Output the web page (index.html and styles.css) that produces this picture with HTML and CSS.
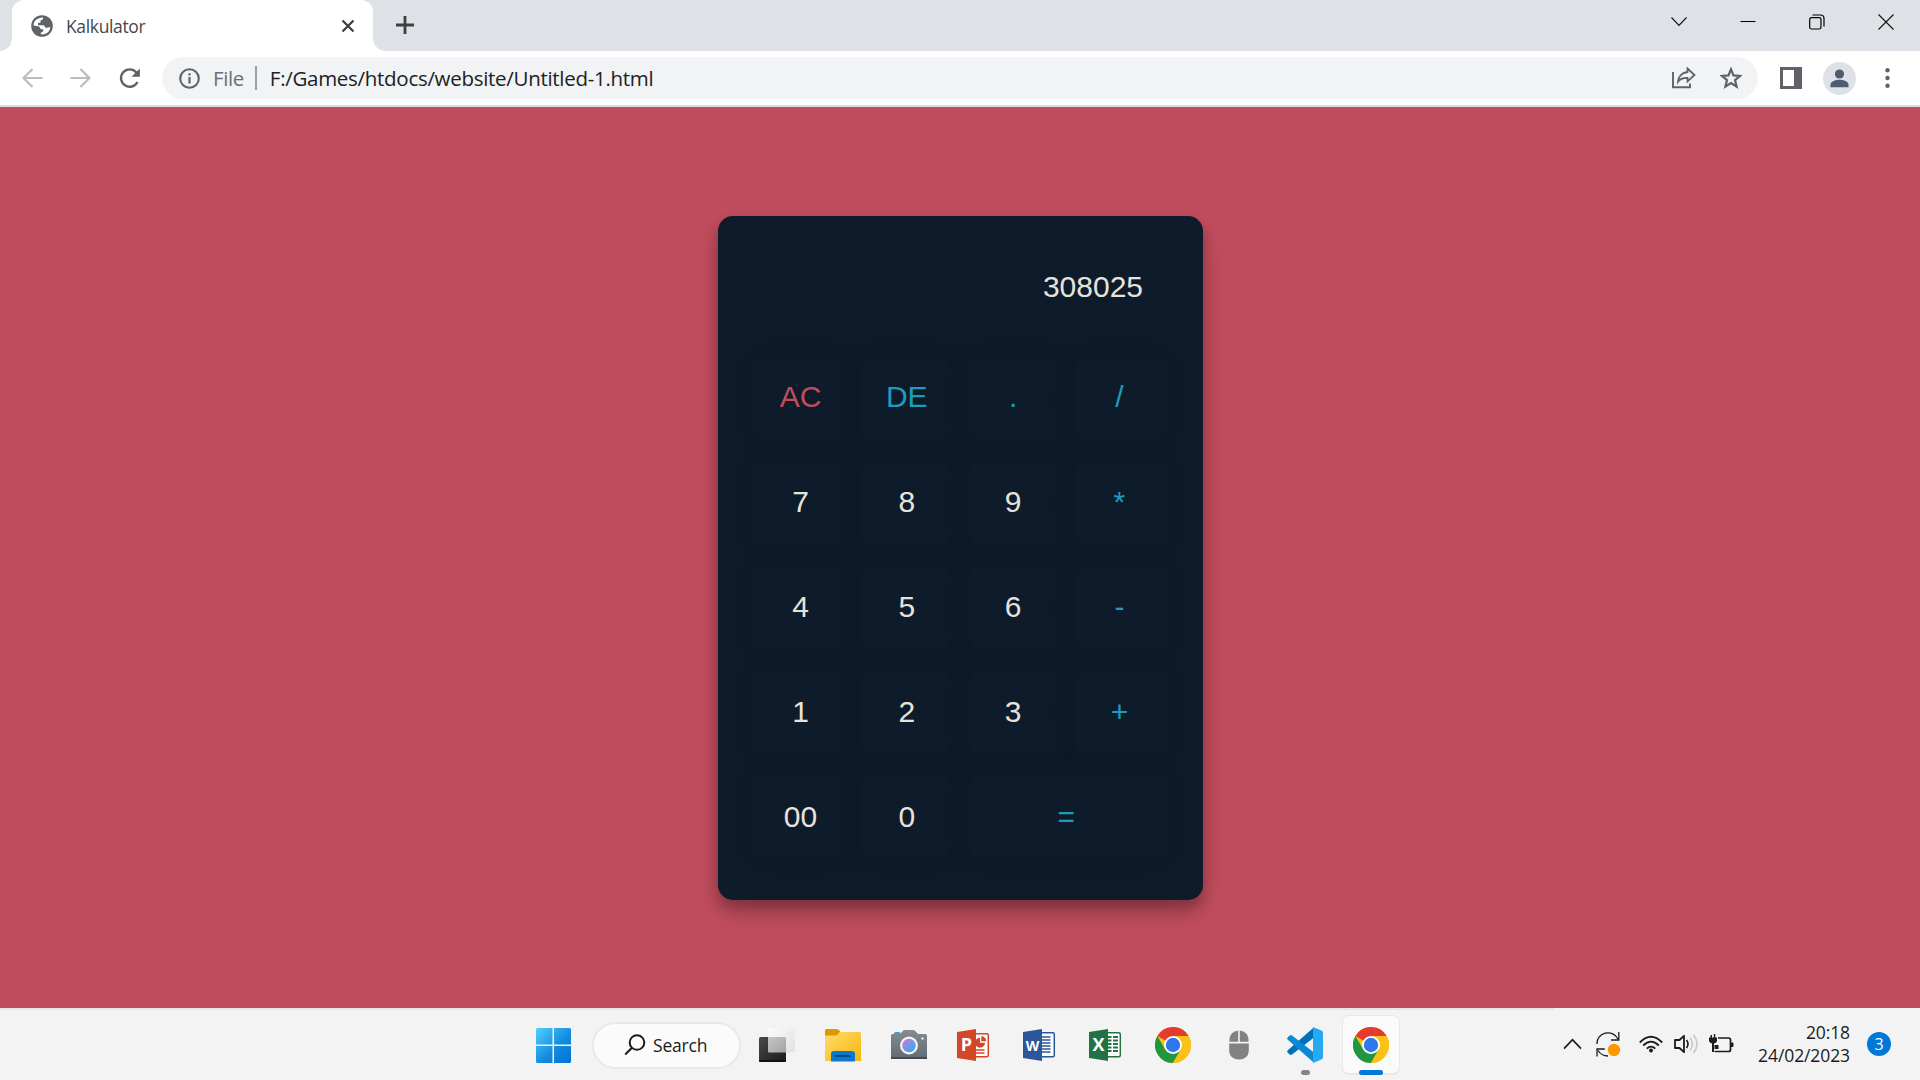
FILE: index.html
```html
<!DOCTYPE html>
<html lang="en">
<head>
<meta charset="utf-8">
<title>Kalkulator</title>
<link rel="stylesheet" href="styles.css">
</head>
<body>
<div class="screen">
  <header class="tabstrip">
    <div class="tab">
      <svg class="globe" width="22" height="22" viewBox="0 0 22 22"><circle cx="11" cy="11" r="10.800" fill="#5f6368"/><path d="M2.500 10.500C2.700 6 6.200 2.600 12 2.500c.3 1.600-.4 2.600-2.300 2.800L9.500 7.600 7 8v2.300h5.200c1.300 0 1.500 1 1.800 2 1.400.9 3.300.6 5.200-.5.200 4.800-4.300 8.500-9.400 7.500v-1.800c2.300-.2 2.700-1.300 2.500-3-2.500-.2-3.600-.9-3.900-3z" fill="#fff"/></svg>
      <span class="tab-title">Kalkulator</span>
      <svg class="tab-close" width="14" height="14" viewBox="0 0 14 14"><path d="M1.500 1.500l11 11m0-11l-11 11" stroke="#3c4043" stroke-width="2.300"/></svg>
    </div>
    <svg class="new-tab" width="18" height="18" viewBox="0 0 18 18"><path d="M9 0v18M0 9h18" stroke="#3c4043" stroke-width="2.800"/></svg>
    <div class="window-controls">
      <svg width="16" height="10" viewBox="0 0 16 10"><path d="M.5.5L8 8.500l7.500-8" fill="none" stroke="#111" stroke-width="1.100"/></svg>
      <svg width="16" height="16" viewBox="0 0 16 16"><path d="M.5 7.500h15" stroke="#000"/></svg>
      <svg width="16" height="16" viewBox="0 0 16 16"><rect x=".7" y="3.700" width="11.300" height="11.300" rx="1.800" fill="none" stroke="#000" stroke-width="1.200"/><path d="M3.500 1h8c2.200 0 3.500 1.500 3.500 3.500v8" fill="none" stroke="#000" stroke-width="1.200"/></svg>
      <svg width="16" height="16" viewBox="0 0 16 16"><path d="M.5.5l15 15m0-15l-15 15" stroke="#111" stroke-width="1.100"/></svg>
    </div>
  </header>

  <nav class="toolbar">
    <svg class="back" width="21" height="20" viewBox="0 0 21 20"><path d="M20.500 10H2M10.500 1L1.500 10l9 9" fill="none" stroke="#babcbe" stroke-width="2.200"/></svg>
    <svg class="forward" width="21" height="20" viewBox="0 0 21 20"><path d="M.5 10H19M10.500 1l9 9-9 9" fill="none" stroke="#babcbe" stroke-width="2.200"/></svg>
    <svg class="reload" width="22" height="21" viewBox="0 0 22 21"><path d="M17.300 4.400A8.700 8.700 0 1 0 18.500 14" fill="none" stroke="#5f6368" stroke-width="2.400"/><path d="M20.800.5v8.200h-8.200z" fill="#5f6368"/></svg>
    <div class="omnibox">
      <svg class="info" width="21" height="21" viewBox="0 0 21 21"><circle cx="10.500" cy="10.500" r="9.300" fill="none" stroke="#5f6368" stroke-width="2.100"/><path d="M10.500 9v6.500M10.500 5.200v2.300" stroke="#5f6368" stroke-width="2.200"/></svg>
      <span class="scheme">File</span>
      <span class="divider"></span>
      <span class="url">F:/Games/htdocs/website/Untitled-1.html</span>
      <svg class="share" width="24" height="22" viewBox="0 0 24 22"><path d="M1 5v15.300h17v-3.800" fill="none" stroke="#5f6368" stroke-width="1.900"/><path d="M15.500 1.500L22.500 8l-7 6.500v-3.700c-4.500-.2-7.500 1-9.500 4 .3-5.500 4-9.200 9.500-9.800z" fill="none" stroke="#5f6368" stroke-width="1.800"/></svg>
      <svg class="star" width="22" height="22" viewBox="0 0 22 22"><path d="M11 2.300l2.500 6.100 6.500.5-5 4.200 1.600 6.400L11 16l-5.600 3.500L7 13.100 2 8.900l6.500-.5z" fill="none" stroke="#5f6368" stroke-width="2.200"/></svg>
    </div>
    <svg class="panel" width="22" height="22" viewBox="0 0 22 22"><path fill-rule="evenodd" d="M0 0h22v22H0zM3 3v16h11V3z" fill="#5f6368"/></svg>
    <svg class="avatar" width="33" height="33" viewBox="0 0 33 33"><circle cx="16.500" cy="16.500" r="16.500" fill="#dee1e6"/><circle cx="16.500" cy="12" r="4.600" fill="#4f5b70"/><path d="M7.500 25.300v-2.500c0-3.300 5-5 9-5s9 1.700 9 5v2.500z" fill="#4f5b70"/></svg>
    <svg class="menu" width="5" height="20" viewBox="0 0 5 20"><g fill="#5f6368"><circle cx="2.500" cy="2.300" r="2.200"/><circle cx="2.500" cy="10" r="2.200"/><circle cx="2.500" cy="17.700" r="2.200"/></g></svg>
  </nav>

  <main class="page">
    <section class="calculator">
      <div class="display">308025</div>
      <div class="keys">
        <button class="key clear">AC</button><button class="key op">DE</button><button class="key op">.</button><button class="key op">/</button>
        <button class="key">7</button><button class="key">8</button><button class="key">9</button><button class="key op">*</button>
        <button class="key">4</button><button class="key">5</button><button class="key">6</button><button class="key op">-</button>
        <button class="key">1</button><button class="key">2</button><button class="key">3</button><button class="key op">+</button>
        <button class="key">00</button><button class="key">0</button><button class="key op equals">=</button>
      </div>
    </section>
  </main>

  <footer class="taskbar">
    <svg width="0" height="0" class="defs"><defs>
      <linearGradient id="win" x1="0" y1="0" x2="1" y2="1"><stop offset="0" stop-color="#4fd3ff"/><stop offset=".55" stop-color="#168cdf"/><stop offset="1" stop-color="#0072d2"/></linearGradient>
      <linearGradient id="folder" x1="0" y1="0" x2="1" y2="1"><stop offset="0" stop-color="#ffdc70"/><stop offset="1" stop-color="#f7b508"/></linearGradient>
      <linearGradient id="lens" x1="0" y1="0" x2="1" y2="1"><stop offset=".15" stop-color="#b780df"/><stop offset=".9" stop-color="#35aaf0"/></linearGradient>
      <linearGradient id="dark" x1="0" y1="0" x2="1" y2="1"><stop offset="0" stop-color="#4a4947"/><stop offset="1" stop-color="#1c1c1b"/></linearGradient>
      <linearGradient id="glass" x1="0" y1="0" x2="1" y2="1"><stop offset="0" stop-color="#fff" stop-opacity=".95"/><stop offset="1" stop-color="#d8d8d8" stop-opacity=".85"/></linearGradient>
      <linearGradient id="body" x1="0" y1="0" x2="0" y2="1"><stop offset="0" stop-color="#858b92"/><stop offset="1" stop-color="#646a72"/></linearGradient>
      <symbol id="chrome" viewBox="0 0 36 36"><circle cx="18" cy="18" r="18" fill="#fbc116"/><path d="M18 18L2.400 9A18 18 0 0 1 33.600 9z" fill="#e33b2e"/><path d="M2.400 9A18 18 0 0 0 18 36l7.800-13.500L10.200 22.500z" fill="#22963f"/><path d="M18 9h15.600a18 18 0 0 1-15.600 27l7.800-13.500z" fill="#fbc116"/><circle cx="18" cy="18" r="9" fill="#fff"/><circle cx="18" cy="18" r="7.200" fill="#2f78ec"/></symbol>
    </defs></svg>
    <div class="apps">
      <span class="app"><svg width="35" height="35" viewBox="0 0 35 35"><path fill="url(#win)" d="M1.500 0H16.500V16.500H0V1.500Q0 0 1.500 0zM18 0h15.500Q35 0 35 1.500v15H18zM0 18h16.500v17h-15Q0 35 0 33.500zM18 18h17v15.500q0 1.500-1.500 1.500H18z"/></svg></span>
      <div class="search"><svg width="22" height="22" viewBox="0 0 22 22"><circle cx="13" cy="8.500" r="7.300" fill="none" stroke="#1c1c1c" stroke-width="2"/><path d="M8 13.700L1.200 20.500" stroke="#1c1c1c" stroke-width="2"/></svg><span>Search</span></div>
      <span class="app"><svg width="36" height="36" viewBox="0 0 36 36"><rect x="0" y="10" width="27" height="25" rx="1.500" fill="url(#dark)"/><path d="M0 33h27v.5q0 1.500-1.500 1.500h-24Q0 35 0 33.500z" fill="#111"/><rect x="9" y="1" width="27" height="24.500" rx="1" fill="url(#glass)" opacity=".78"/></svg></span>
      <span class="app"><svg width="36" height="36" viewBox="0 0 36 36"><path d="M0 3.500Q0 2 1.500 2H11q2 0 3.500 1.500L16 6v5H0z" fill="#d99a06"/><path d="M0 8.500h10q2.500 0 4.500-3.500H34.500Q36 5 36 6.500V34H0z" fill="url(#folder)"/><path d="M6 34.500V27q0-3 3-3h18q3 0 3 3v7.500z" fill="#0b78cc"/><path d="M11 29h14" stroke="#06498f" stroke-width="2" stroke-linecap="round"/></svg></span>
      <span class="app"><svg width="36" height="36" viewBox="0 0 36 36"><path d="M3 8V6.500Q3 5 4.500 5H8q1.500 0 1.500 1.500V8z" fill="#23a5ea"/><path d="M0 8.500Q0 7 1.500 7H9l3-3.200Q12.700 3 14 3h8q1.300 0 2 .8L27 7h7.500Q36 7 36 8.500V32H0z" fill="url(#body)"/><path d="M0 30h36v2H0z" fill="#454a52"/><circle cx="18" cy="18.500" r="9" fill="#f4f4f6"/><circle cx="18" cy="18.500" r="6.800" fill="url(#lens)"/><path d="M31.500 10v3M30 11.500h3" stroke="#dde" stroke-width="1.200"/></svg></span>
      <span class="app office-app"><svg width="34" height="34" viewBox="0 0 34 34"><rect x="16" y="5.700" width="15.300" height="23" rx="1.500" fill="#fff" stroke="#d24726" stroke-width="1.500"/><path d="M23 9.800a5 5 0 1 0 5 5h-5z" fill="#d24726"/><path d="M24.300 8.300a5 5 0 0 1 5 5h-5z" fill="#d24726"/><path d="M19 22h8.500M19 25h8.500" stroke="#d24726" stroke-width="1.500"/><path d="M0 4L19 1v32L0 30z" fill="#d24726"/><text x="9.500" y="23" class="office p">P</text></svg></span>
      <span class="app office-app"><svg width="34" height="34" viewBox="0 0 34 34"><rect x="16" y="4.700" width="15.300" height="24" rx="1.500" fill="#fff" stroke="#2b579a" stroke-width="1.500"/><path d="M19 9h8.500M19 12h8.500M19 15h8.500M19 18h8.500M19 21h8.500M19 24h8.500" stroke="#2b579a" stroke-width="1.500"/><path d="M0 4L19 1v32L0 30z" fill="#2b579a"/><text x="9.500" y="22.500" class="office w">W</text></svg></span>
      <span class="app office-app"><svg width="34" height="34" viewBox="0 0 34 34"><rect x="16" y="4.700" width="15.300" height="24" rx="1.500" fill="#fff" stroke="#217346" stroke-width="1.500"/><path d="M19 9h3.500M24 9h5M19 12.500h3.500M24 12.500h5M19 16h3.500M24 16h5M19 19.500h3.500M24 19.500h5M19 23h3.500M24 23h5" stroke="#217346" stroke-width="2"/><path d="M0 4L19 1v32L0 30z" fill="#217346"/><text x="9.500" y="23" class="office x">X</text></svg></span>
      <span class="app"><svg width="36" height="36"><use href="#chrome"/></svg></span>
      <span class="app"><svg width="20" height="30" viewBox="0 0 20 30"><path d="M9.200.5v11.300H.5V8.500q.7-6.700 8.700-8zM10.800.5v11.300h8.700V8.500q-.7-6.700-8.700-8zM.2 13.500h19.600V21q-.8 8.500-9.800 8.500T.2 21z" fill="#828282"/></svg></span>
      <span class="app running"><svg width="36" height="36" viewBox="0 0 36 36"><path d="M27 .3L.8 23.300q-1.300 1.300 0 2.500l1.900 1.700q1.100.9 2.300.1L27 10.500z" fill="#0071b8"/><path d="M27 35.700L.8 12.700q-1.300-1.300 0-2.500l1.900-1.700Q3.800 7.600 5 8.400L27 25.500z" fill="#0a8ad6"/><path d="M26 0l8.500 3.500q1.500.8 1.500 2.400v24.200q0 1.600-1.500 2.400L26 36z" fill="#27a9f2"/></svg><i class="dot"></i></span>
      <span class="app active"><svg width="36" height="36"><use href="#chrome"/></svg><i class="dot"></i></span>
    </div>
    <div class="tray">
      <svg class="chevron" width="19" height="12" viewBox="0 0 19 12"><path d="M1 10.700l8.500-9 8.500 9" fill="none" stroke="#1c1c1c" stroke-width="1.700"/></svg>
      <svg class="sync" width="25" height="25" viewBox="0 0 25 25"><path d="M1 12A11 10.500 0 0 1 22 7M22.800 0v8H15M1 24.500V17h7.800M2 18.500q3.500 5.500 10 5.500" fill="none" stroke="#1c1c1c" stroke-width="1.300"/><circle cx="18" cy="18" r="6.200" fill="#ff9800"/></svg>
      <svg class="wifi" width="24" height="18" viewBox="0 0 24 18"><path d="M.8 7.500Q12-4 23.200 7.500M4.200 10.500q7.800-7.700 15.600 0M7.700 13.700q4.300-4.200 8.600 0" fill="none" stroke="#1c1c1c" stroke-width="1.800"/><circle cx="12" cy="15.500" r="2" fill="#1c1c1c"/></svg>
      <svg class="volume" width="25" height="20" viewBox="0 0 25 20"><path d="M1 6h4.500L10 1.800v16.400L5.500 14H1z" fill="none" stroke="#1c1c1c" stroke-width="1.800" stroke-linejoin="round"/><path d="M12.500 6q3 4 0 8" fill="none" stroke="#1c1c1c" stroke-width="1.600"/><path d="M16 3.500q5 6.500 0 13M19.500.8q7 9.200 0 18.400" fill="none" stroke="#c8c8c8" stroke-width="1.600"/></svg>
      <svg class="battery" width="25" height="20" viewBox="0 0 25 20"><path d="M9 4h10.500q2 0 2 2v9.500q0 2-2 2H5.500" fill="none" stroke="#1c1c1c" stroke-width="1.700"/><path d="M22 8.500h1.500q1 0 1 1v2.500q0 1-1 1H22zM5.500 11h4v4h-4z" fill="#1c1c1c"/><path d="M0 3.500h1.500V1h1.500v2.500h1.800V0h1.500v3.500H8V7q-.8 2-3 2.500V18H3V9.500Q.8 9 0 7z" fill="#1c1c1c"/></svg>
      <div class="clock"><span class="time">20:18</span><span class="date">24/02/2023</span></div>
      <span class="badge">3</span>
    </div>
  </footer>
</div>
</body>
</html>
```
FILE: styles.css
```css
* { box-sizing: border-box; }
body { margin: 0; font-family: "Open Sans", "Noto Sans", sans-serif; }
svg { display: block; flex: none; }
.defs { position: absolute; }
.screen { width: 1920px; height: 1080px; display: flex; flex-direction: column; overflow: hidden; }

.tabstrip { height: 51px; background: #dee1e6; display: flex; align-items: flex-start; padding-left: 12px; }
.tab { position: relative; width: 361px; height: 51px; background: #fff; border-radius: 12px 12px 0 0; display: flex; align-items: center; padding: 0 19px; }
.tab::before, .tab::after { content: ""; position: absolute; bottom: 0; width: 12px; height: 12px; }
.tab::before { left: -12px; background: radial-gradient(circle at 0 0, transparent 11.500px, #fff 12px); }
.tab::after { right: -12px; background: radial-gradient(circle at 100% 0, transparent 11.500px, #fff 12px); }
.tab-title { margin-left: 13px; font-size: 17.500px; letter-spacing: -.35px; color: #45484c; flex: 1; }
.tab-close { margin-right: -1px; }
.new-tab { margin: 16px 0 0 23px; }
.window-controls { margin-left: auto; display: flex; align-items: center; gap: 53px; height: 43px; padding-right: 26px; }

.toolbar { height: 56px; background: #fff; border-bottom: 2px solid #dadbdd; display: flex; align-items: center; padding: 0 30px 0 23px; }
.back { margin-left: -1px; }
.forward { margin-left: 27px; }
.reload { margin-left: 28px; }
.omnibox { margin-left: 21px; width: 1596px; height: 42px; border-radius: 21px; background: #f1f3f4; display: flex; align-items: center; padding: 0 16px 0 17px; font-size: 20.500px; color: #202124; }
.scheme { margin-left: 13px; color: #6b6f74; letter-spacing: -.4px; }
.divider { width: 2px; height: 24px; background: #9a9da1; margin: 0 13px 0 11px; }
.url { flex: 1; letter-spacing: -.29px; white-space: nowrap; }
.share { margin-right: 24px; }
.panel { margin-left: 22px; }
.avatar { margin-left: 21px; }
.menu { margin-left: auto; }

.page { flex: 1; background: #c04d5d; display: flex; justify-content: center; align-items: flex-start; padding-top: 109px; }
.calculator { width: 485px; height: 684px; margin-left: 1px; border-radius: 15px; background: #0e1b2a; padding: 36px 37px; box-shadow: 0 12.500px 25px rgba(0,0,0,.19), 0 7.500px 12px rgba(0,0,0,.2); font-family: "Liberation Sans", Arial, sans-serif; font-size: 30px; }
.display { height: 70px; line-height: 70px; padding-right: 23px; text-align: right; color: #e6e3dc; }
.keys { margin-top: 38px; display: grid; grid-template-columns: repeat(4, 91px); grid-auto-rows: 75px; gap: 30px 15.300px; }
.key { border: 0; padding: 0 0 2px; border-radius: 8px; background: #0e1b2a; color: #e6e3dc; font: inherit; box-shadow: 0 0 32px rgba(0,0,0,.08); }
.clear { color: #c04d5d; }
.op { color: #1f9bbd; }
.equals { grid-column: span 2; }

.taskbar { position: relative; height: 72px; background: #f3f3f3; display: flex; justify-content: center; }
.taskbar::before { content: ""; position: absolute; left: 0; top: 0; width: 1554px; height: 2px; background: #e6e6e6; }
.apps { display: flex; align-items: center; padding-top: 2px; margin-left: 4px; }
.app { position: relative; width: 58px; height: 60px; margin: 0 4px; display: flex; justify-content: center; align-items: center; }
.office-app svg { margin-left: -2px; }
.search { width: 149px; height: 47px; margin: 0 3px 0 6px; border: 2px solid #e9e9e9; border-radius: 24px; background: #fbfbfb; display: flex; align-items: center; padding-left: 30px; gap: 7px; font-size: 17.500px; letter-spacing: -.2px; color: #1c1c1c; }
.office { fill: #fff; font-family: "Open Sans", sans-serif; font-weight: 700; text-anchor: middle; }
.p { font-size: 18px; }
.w { font-size: 14px; }
.x { font-size: 18px; }
.dot { position: absolute; bottom: 0; width: 9px; height: 5px; border-radius: 3px; background: #868686; }
.active { background: #fafafa; border: 1px solid #e8e8e8; border-bottom-width: 2px; border-radius: 7px; }
.active .dot { width: 24px; background: #0078d7; bottom: -2px; }
.tray { position: absolute; right: 29px; top: 0; height: 72px; display: flex; align-items: center; }
.sync { margin-left: 14px; }
.wifi { margin-left: 18px; }
.volume { margin-left: 11px; }
.battery { margin-left: 10px; }
.clock { width: 116px; text-align: right; font-size: 17.500px; line-height: 23px; letter-spacing: -.1px; color: #1c1c1c; display: flex; flex-direction: column; }
.badge { margin-left: 17px; width: 24px; height: 24px; border-radius: 50%; background: #0078d7; color: #fff; font-size: 16px; line-height: 24px; text-align: center; }
```
